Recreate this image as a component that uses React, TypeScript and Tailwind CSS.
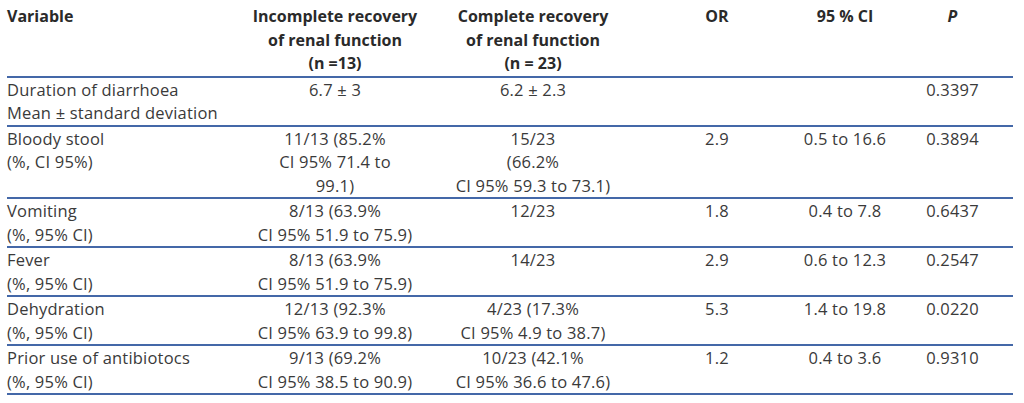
import React from "react";

type Row = {
  v: string[];
  a: string[];
  b: string[];
  or: string;
  ci: string;
  p: string;
};

const rows: Row[] = [
  { v: ["Duration of diarrhoea", "Mean ± standard deviation"], a: ["6.7 ± 3"], b: ["6.2 ± 2.3"], or: "", ci: "", p: "0.3397" },
  { v: ["Bloody stool", "(%, CI 95%)", ""], a: ["11/13 (85.2%", "CI 95% 71.4 to", "99.1)"], b: ["15/23", "(66.2%", "CI 95% 59.3 to 73.1)"], or: "2.9", ci: "0.5 to 16.6", p: "0.3894" },
  { v: ["Vomiting", "(%, 95% CI)"], a: ["8/13 (63.9%", "CI 95% 51.9 to 75.9)"], b: ["12/23"], or: "1.8", ci: "0.4 to 7.8", p: "0.6437" },
  { v: ["Fever", "(%, 95% CI)"], a: ["8/13 (63.9%", "CI 95% 51.9 to 75.9)"], b: ["14/23"], or: "2.9", ci: "0.6 to 12.3", p: "0.2547" },
  { v: ["Dehydration", "(%, 95% CI)"], a: ["12/13 (92.3%", "CI 95% 63.9 to 99.8)"], b: ["4/23 (17.3%", "CI 95% 4.9 to 38.7)"], or: "5.3", ci: "1.4 to 19.8", p: "0.0220" },
  { v: ["Prior use of antibiotocs", "(%, 95% CI)"], a: ["9/13 (69.2%", "CI 95% 38.5 to 90.9)"], b: ["10/23 (42.1%", "CI 95% 36.6 to 47.6)"], or: "1.2", ci: "0.4 to 3.6", p: "0.9310" },
];

const grid = "grid grid-cols-[233px_190px_206px_162px_94px_121px]";

function Lines({ lines, center }: { lines: string[]; center?: boolean }) {
  return (
    <div className={center ? "flex flex-col items-center" : "flex flex-col"}>
      {lines.map((l, i) => (
        <div key={i} className="whitespace-nowrap h-[23.5px]">
          {l}
        </div>
      ))}
    </div>
  );
}

export default function App() {
  return (
    <div
      className="w-[1024px] h-[403px] bg-white text-[#3a3a3a] text-[16.5px] leading-[23.5px] tracking-[0.2px] pl-[7px] pt-[5px]"
      style={{ fontFamily: '"Open Sans", "Noto Sans", sans-serif' }}
    >
      <div className="w-[1006px]">
        <div className={`${grid} border-b-2 border-[#4468a8] font-bold text-[16px] tracking-normal text-[#2a2a2a]`}>
          <div className="whitespace-nowrap">Variable</div>
          <div className="flex flex-col items-center">
            <div className="whitespace-nowrap">Incomplete recovery</div>
            <div className="whitespace-nowrap">of renal function</div>
            <div className="whitespace-nowrap">(n =13)</div>
          </div>
          <div className="flex flex-col items-center">
            <div className="whitespace-nowrap">Complete recovery</div>
            <div className="whitespace-nowrap">of renal function</div>
            <div className="whitespace-nowrap">(n = 23)</div>
          </div>
          <div className="text-center">OR</div>
          <div className="text-center whitespace-nowrap">95 % CI</div>
          <div className="text-center italic">P</div>
        </div>
        {rows.map((r, i) => (
          <div key={i} className={`${grid} border-b-2 border-[#4468a8]`}>
            <Lines lines={r.v} />
            <Lines lines={r.a} center />
            <Lines lines={r.b} center />
            <div className="text-center">{r.or}</div>
            <div className="text-center whitespace-nowrap">{r.ci}</div>
            <div className="text-center">{r.p}</div>
          </div>
        ))}
      </div>
    </div>
  );
}
